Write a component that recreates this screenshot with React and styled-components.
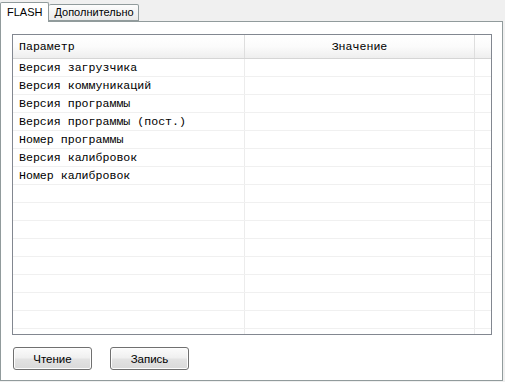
import styled, { createGlobalStyle } from "styled-components";

const GlobalStyle = createGlobalStyle`
  html, body {
    margin: 0;
    padding: 0;
    background: #f0f0f0;
  }
  body {
    font-family: "Liberation Sans", Arial, sans-serif;
  }
`;

const Window = styled.div`
  width: 505px;
  height: 382px;
  box-sizing: border-box;
  padding-top: 2px;
  display: flex;
  flex-direction: column;
  background: #f0f0f0;
`;

const TabStrip = styled.div`
  display: flex;
  align-items: flex-end;
  height: 19px;
  position: relative;
  z-index: 1;
`;

const Tab = styled.div`
  box-sizing: border-box;
  height: ${(p) => (p.$active ? "20px" : "17px")};
  margin-bottom: ${(p) => (p.$active ? "-1px" : "0")};
  padding: ${(p) => (p.$active ? "3px 6px 0 6px" : "1px 4px 0 5px")};
  border: 1px solid #919b9c;
  border-bottom: ${(p) => (p.$active ? "none" : "1px solid #919b9c")};
  border-left: ${(p) => (p.$active ? "1px solid #919b9c" : "none")};
  border-radius: 2px 2px 0 0;
  background: ${(p) =>
    p.$active ? "#ffffff" : "linear-gradient(#fdfdfd, #e9e9e9)"};
  font-size: 11px;
  color: #000;
  white-space: nowrap;
`;

const Panel = styled.div`
  width: 503px;
  height: 360px;
  box-sizing: border-box;
  border: 1px solid #919b9c;
  background: #fff;
  padding: 12px 0 0 11px;
  display: flex;
  flex-direction: column;
`;

const Grid = styled.div`
  width: 480px;
  height: 301px;
  box-sizing: border-box;
  border: 1px solid #828790;
  overflow: hidden;
  font-family: "Liberation Mono", "Courier New", monospace;
  font-size: 11.6px;
  color: #000;
`;

const HeaderRow = styled.div`
  display: flex;
  height: 24px;
  box-sizing: border-box;
  border-bottom: 1px solid #d5d5d5;
  background: linear-gradient(#ffffff 0%, #fbfbfb 50%, #eeeeee 100%);
`;

const HeaderCell = styled.div`
  box-sizing: border-box;
  width: ${(p) => p.$w}px;
  flex: none;
  display: flex;
  align-items: center;
  justify-content: ${(p) => (p.$center ? "center" : "flex-start")};
  padding-left: ${(p) => (p.$center ? "0" : "6px")};
  border-right: ${(p) => (p.$last ? "none" : "1px solid #dedede")};
`;

const Row = styled.div`
  display: flex;
  height: 18px;
  box-sizing: border-box;
  border-bottom: 1px solid #f0f0f0;
`;

const Cell = styled.div`
  box-sizing: border-box;
  width: ${(p) => p.$w}px;
  flex: none;
  display: flex;
  align-items: center;
  padding-left: 6px;
  white-space: nowrap;
  border-right: ${(p) => (p.$last ? "none" : "1px solid #ececec")};
`;

const ButtonBar = styled.div`
  display: flex;
  gap: 18px;
  padding: 12px 0 0 1px;
`;

const Button = styled.button`
  width: 79px;
  height: 23px;
  box-sizing: border-box;
  border: 1px solid #707070;
  border-radius: 3px;
  background: linear-gradient(#fbfbfb 0%, #f0f0f0 45%, #e2e2e2 55%, #d9d9d9 100%);
  font-family: "Liberation Sans", Arial, sans-serif;
  font-size: 11.5px;
  color: #000;
  padding: 0;
  box-shadow: inset 0 0 0 1px #fdfdfd;
`;

const cols = [232, 230, 16];

const params = [
  "Версия загрузчика",
  "Версия коммуникаций",
  "Версия программы",
  "Версия программы (пост.)",
  "Номер программы",
  "Версия калибровок",
  "Номер калибровок",
];

const rows = Array.from({ length: 16 }, (_, i) => params[i] || "");

export default function App() {
  return (
    <>
      <GlobalStyle />
      <Window>
        <TabStrip>
          <Tab $active>FLASH</Tab>
          <Tab>Дополнительно</Tab>
        </TabStrip>
        <Panel>
          <Grid>
            <HeaderRow>
              <HeaderCell $w={cols[0]}>Параметр</HeaderCell>
              <HeaderCell $w={cols[1]} $center>
                Значение
              </HeaderCell>
              <HeaderCell $w={cols[2]} $last />
            </HeaderRow>
            {rows.map((name, i) => (
              <Row key={i}>
                <Cell $w={cols[0]}>{name}</Cell>
                <Cell $w={cols[1]} />
                <Cell $w={cols[2]} $last />
              </Row>
            ))}
          </Grid>
          <ButtonBar>
            <Button>Чтение</Button>
            <Button>Запись</Button>
          </ButtonBar>
        </Panel>
      </Window>
    </>
  );
}
